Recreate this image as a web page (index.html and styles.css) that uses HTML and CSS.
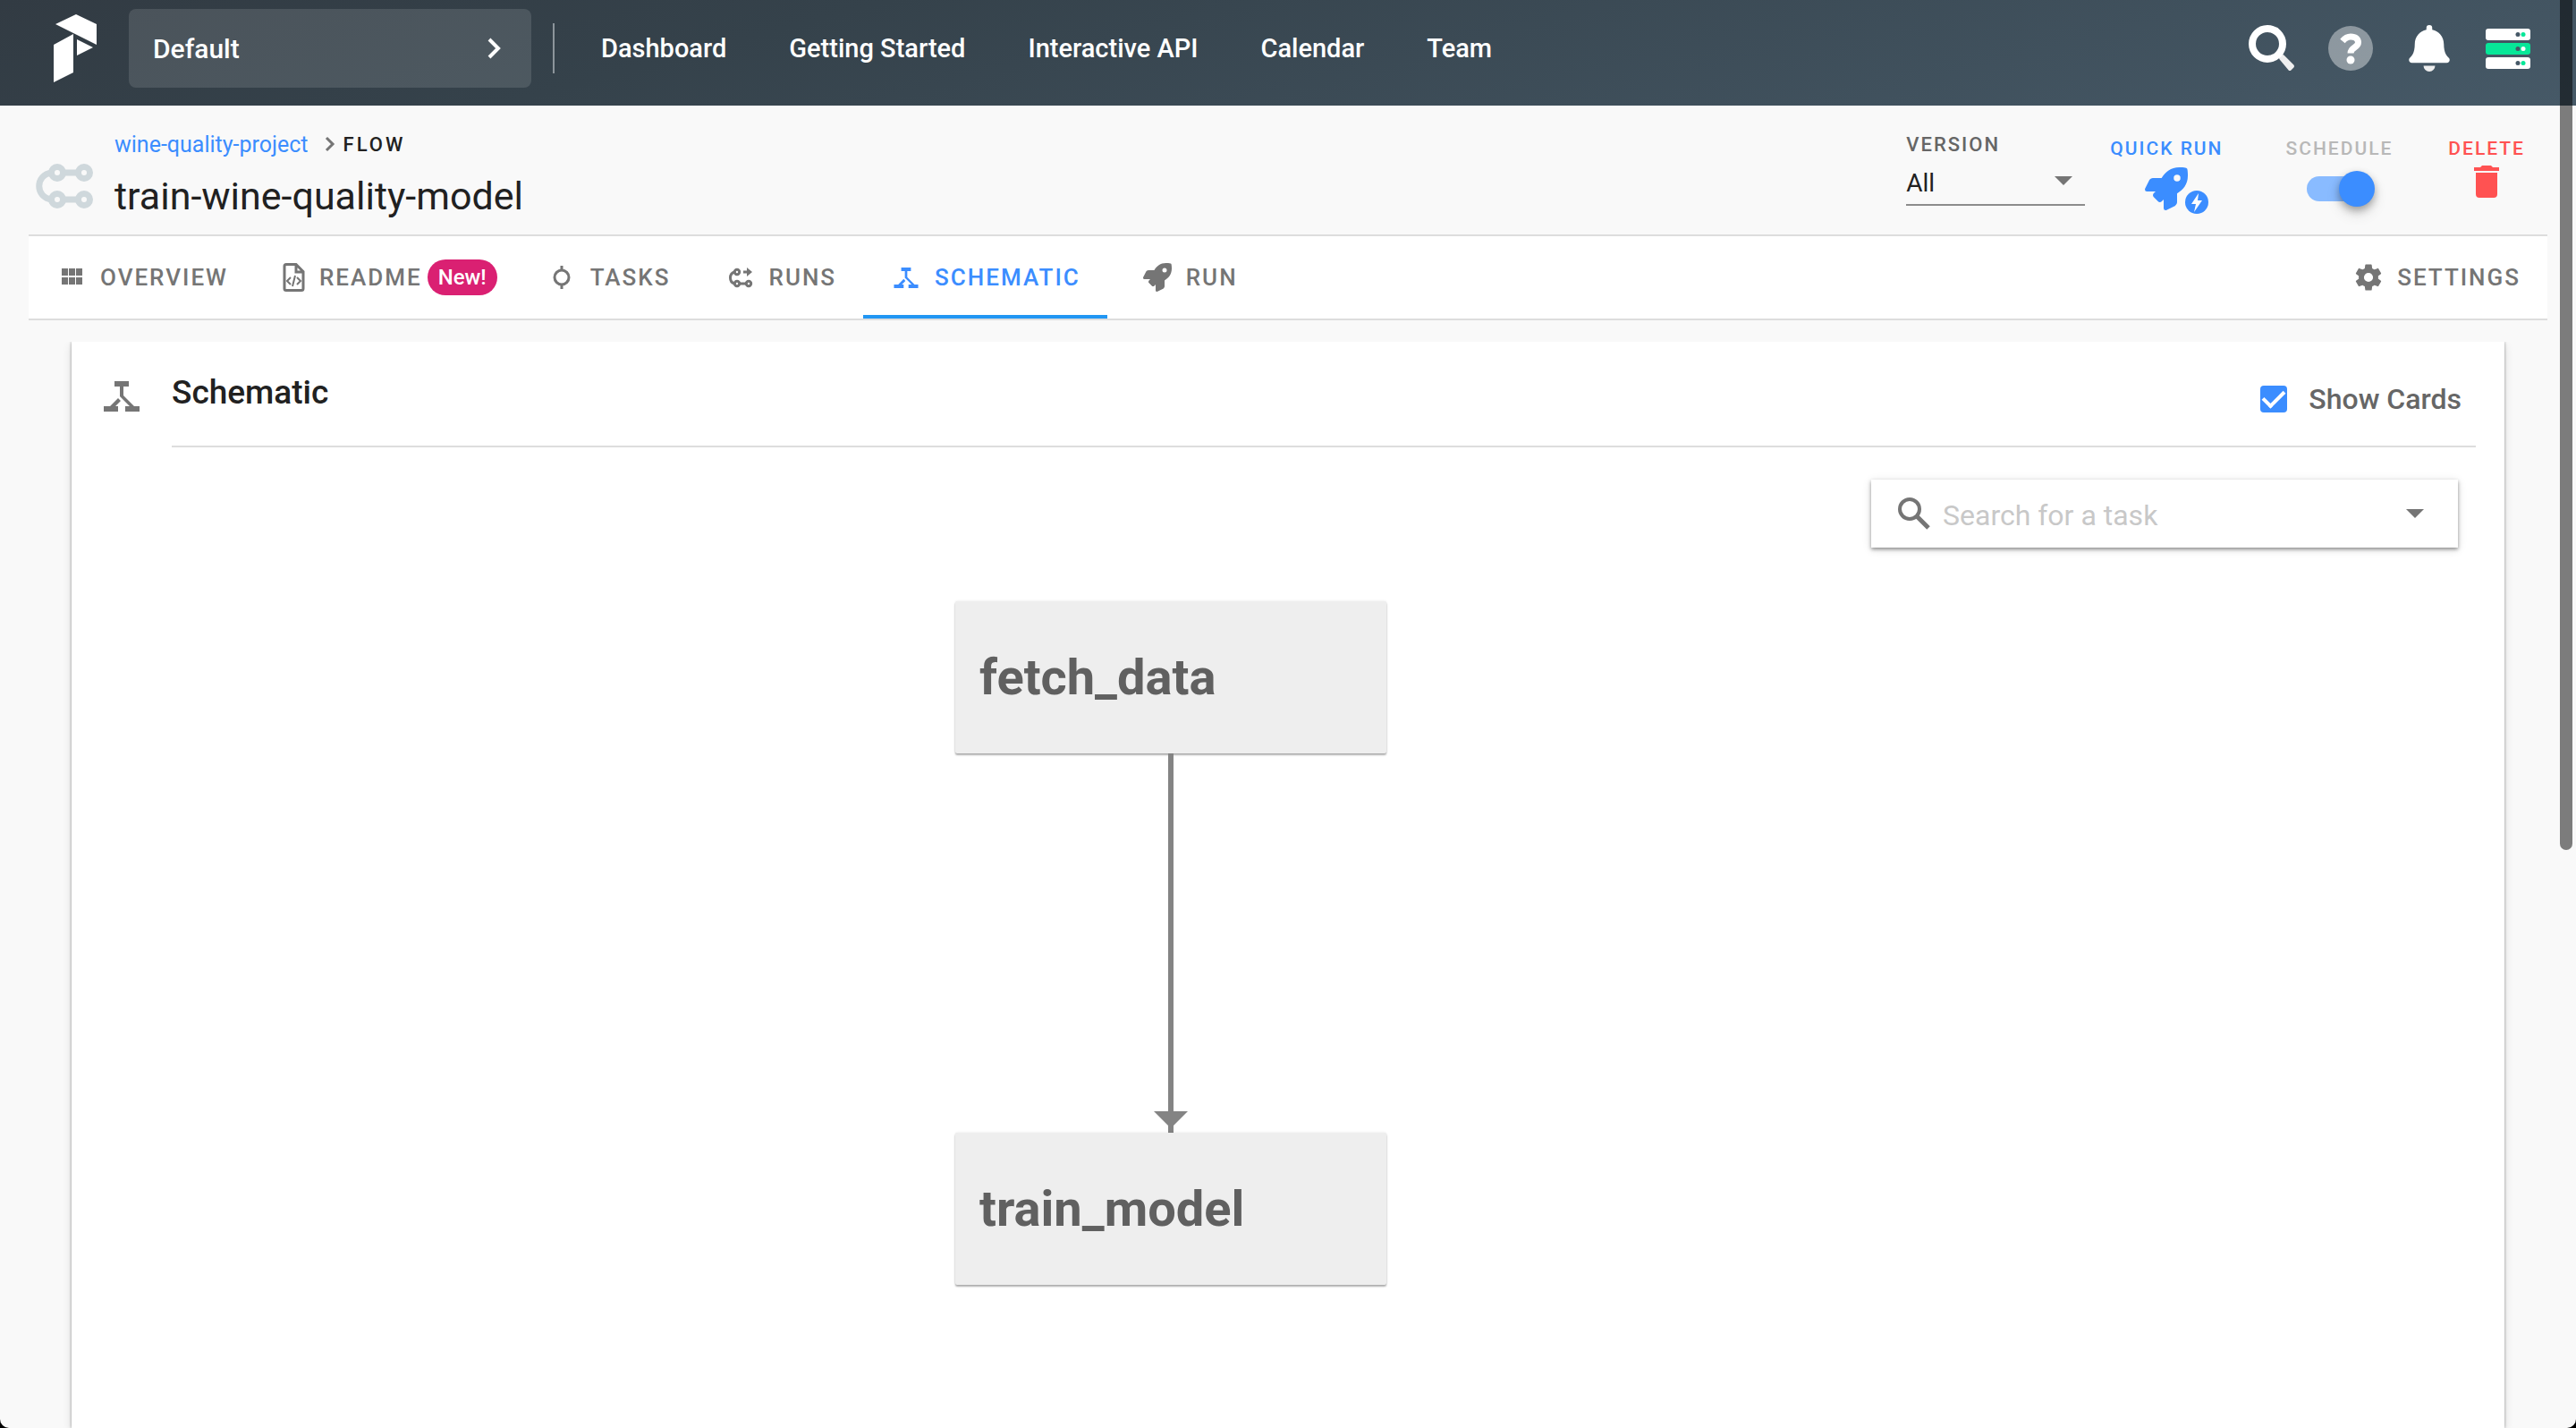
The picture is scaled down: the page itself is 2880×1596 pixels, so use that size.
FILE: index.html
```html
<!DOCTYPE html>
<html lang="en">
<head>
<meta charset="utf-8">
<title>train-wine-quality-model</title>
<link rel="stylesheet" href="styles.css">
</head>
<body>
<svg class="defs" width="0" height="0" aria-hidden="true">
  <symbol id="rocket" viewBox="0 0 512 512"><path d="M505.12 19.09c-1.19-5.53-6.66-11-12.21-12.18C460.72 0 435.51 0 410.41 0 307.18 0 245.27 55.2 199.05 128H94.84c-16.35 0-35.56 11.88-42.89 26.48L2.52 253.3A28.4 28.4 0 0 0 0 264a24 24 0 0 0 24 24h103.82l-22.48 22.47c-11.37 11.36-13 32.26 0 45.25l50.9 50.9c11.16 11.19 32.16 13.16 45.28 0L224 384.16V488a24 24 0 0 0 24 24 28.56 28.56 0 0 0 10.71-2.52l98.73-49.39c14.63-7.29 26.5-26.5 26.5-42.85V312.8C456.54 266.48 512 204.4 512 101.7c.08-25.2.08-50.4-6.88-82.61zM384 168a40 40 0 1 1 40-40 40 40 0 0 1-40 40z"/></symbol>
  <symbol id="schematic" viewBox="0 0 40 34"><path d="M12 0h16v6h-6v10l12 12h6v6H24v-6h5l-9-9L18 17V6h-6zM16 19l3 3-6 6h3v6H0v-6h7z"/></symbol>
</svg>
<div class="page">
  <header class="topbar">
    <a class="logo" href="#" aria-label="Home"><svg width="48" height="76" viewBox="0 0 48 76"><path d="M2 11 25 0l23 11v23zM0 34 22 22v43L0 76zM26 28l18 9-18 9z"/></svg></a>
    <button class="tenant" type="button">Default<svg width="16" height="24" viewBox="0 0 16 24"><path d="m3 2 10 10L3 22"/></svg></button>
    <nav class="mainnav">
      <a href="#">Dashboard</a><a href="#">Getting Started</a><a href="#">Interactive API</a><a href="#">Calendar</a><a href="#">Team</a>
    </nav>
    <div class="tools">
      <button type="button" aria-label="Search"><svg width="52" height="52" viewBox="0 0 52 52"><path d="m36 37 2-2 11 11-3 3z" fill="#eee" stroke="#eee" stroke-width="4" stroke-linejoin="round"/><circle cx="21" cy="21" r="17" fill="none" stroke="#fff" stroke-width="8"/></svg></button>
      <button type="button" aria-label="Help"><svg width="52" height="52" viewBox="0 0 52 52"><circle cx="26" cy="26" r="25" fill="#fff" fill-opacity=".4"/><path d="M17 18q4-5 9-5c6 0 8.500 3 8.500 6.500 0 6-8.500 5-8.500 12" fill="none" stroke="#fff" stroke-width="7"/><circle cx="26" cy="39" r="4.500" fill="#fff"/></svg></button>
      <button type="button" aria-label="Notifications"><svg width="52" height="52" viewBox="-32 0 512 512"><path fill="#fff" d="M439.39 362.29c-19.32-20.76-55.47-52-55.47-154.29 0-77.7-54.48-139.9-127.94-155.16V32a32 32 0 1 0-64 0v20.84C118.56 68.1 64.08 130.3 64.08 208c0 102.3-36.15 133.53-55.47 154.29A31.24 31.24 0 0 0 0 384c.11 16.4 13 32 32.1 32h383.8c19.12 0 32-15.6 32.1-32a31.23 31.23 0 0 0-8.61-21.71z"/><path fill="#eee" d="M160 448h128a64 64 0 0 1-128 0z"/></svg></button>
      <button type="button" aria-label="Agents"><svg width="52" height="52" viewBox="0 0 52 52"><rect x="1" y="4" width="50" height="13" rx="3" fill="#fff"/><rect x="1" y="20" width="50" height="13" rx="3" fill="#07e798"/><rect x="1" y="36" width="50" height="13" rx="3" fill="#fff"/><g fill="#465967"><circle cx="37" cy="10.500" r="2.500"/><circle cx="37" cy="26.500" r="2.500"/><circle cx="37" cy="42.500" r="2.500"/></g><circle cx="43" cy="10.500" r="2.500" fill="#07e798"/><circle cx="43" cy="26.500" r="2.500" fill="#fff"/><circle cx="43" cy="42.500" r="2.500" fill="#07e798"/></svg></button>
    </div>
  </header>

  <section class="flowhead">
    <svg class="flowicon" width="64" height="52" viewBox="0 0 64 52"><g fill="none" stroke="#cfd8dc" stroke-width="7"><circle cx="24" cy="11" r="6.500"/><circle cx="54" cy="11" r="6.500"/><circle cx="24" cy="41" r="6.500"/><circle cx="54" cy="41" r="6.500"/><path d="M30 11h18M30 41h18M18 11C-1 13-1 39 18 41"/></g></svg>
    <div class="names">
      <div class="crumbs"><a href="#">wine-quality-project</a><svg width="12" height="18" viewBox="0 0 12 18"><path d="m2 2 7 7-7 7"/></svg><span>FLOW</span></div>
      <h1>train-wine-quality-model</h1>
    </div>
    <div class="version">
      <label for="version">VERSION</label>
      <div class="selectwrap"><select id="version"><option>All</option></select><svg width="20" height="10" viewBox="0 0 20 10"><path d="M0 0h20L10 10z"/></svg></div>
    </div>
    <button class="action quick" type="button">QUICK RUN<span class="quickicon"><svg width="48" height="48"><use href="#rocket"/></svg><svg class="bolt" width="28" height="28" viewBox="0 0 28 28"><circle cx="14" cy="14" r="13"/><path d="m16 4-8 12h5l-2 9 9-13h-5z" fill="#fff"/></svg></span></button>
    <label class="action schedule">SCHEDULE<input type="checkbox" checked></label>
    <button class="action delete" type="button">DELETE<svg width="28" height="36" viewBox="0 0 28 36"><path d="M2 8h24v24q0 4-4 4H6q-4 0-4-4zM0 2h7l2-2h10l2 2h7v4H0z"/></svg></button>
  </section>

  <nav class="tabs">
    <a href="#"><svg width="32" height="32" viewBox="0 0 32 32"><path d="M5 6h7v8H5zm8 0h7v8h-7zm8 0h7v8h-7zM5 16h7v8H5zm8 0h7v8h-7zm8 0h7v8h-7z"/></svg>OVERVIEW</a>
    <a class="readme" href="#"><svg width="32" height="32" viewBox="0 0 32 32"><path class="line" d="M7 1.500h11l8 8v19a2 2 0 0 1-2 2H7a2 2 0 0 1-2-2v-25a2 2 0 0 1 2-2zM18 2v8h8"/><path class="thin" d="m12 16-4 4 4 4M19 16l4 4-4 4M17 14l-3 12"/></svg>README<span class="badge">New!</span></a>
    <a href="#"><svg width="32" height="32" viewBox="0 0 32 32"><path class="line" d="M16 3v5M16 24v5"/><circle class="line" cx="16" cy="16" r="8"/></svg>TASKS</a>
    <a href="#"><svg width="32" height="32" viewBox="0 0 32 32"><g class="line"><circle cx="12" cy="10" r="2.700"/><circle cx="12" cy="23" r="2.700"/><circle cx="25" cy="23" r="2.700"/><path d="M15 23h7M9 10C3 12 3 21 9 23M19 10h5"/></g><path d="m23 5 6 5-6 5z"/></svg>RUNS</a>
    <a class="active" href="#" aria-current="page"><svg width="32" height="23"><use href="#schematic"/></svg>SCHEMATIC</a>
    <a class="runtab" href="#"><svg width="48" height="32"><use href="#rocket"/></svg>RUN</a>
    <a class="settings" href="#"><svg width="32" height="32" viewBox="1 1 22 22"><path d="M12 15.500A3.500 3.500 0 0 1 8.500 12 3.500 3.500 0 0 1 12 8.500a3.500 3.500 0 0 1 3.500 3.500 3.500 3.500 0 0 1-3.500 3.500m7.430-2.530c.04-.32.07-.64.07-.97s-.03-.66-.07-1l2.110-1.630c.19-.15.24-.42.12-.64l-2-3.460c-.12-.22-.39-.31-.61-.22l-2.490 1c-.52-.39-1.060-.73-1.690-.98l-.37-2.650A.506.506 0 0 0 14 2h-4c-.25 0-.46.180-.5.420l-.37 2.650c-.63.250-1.170.59-1.690.98l-2.490-1c-.22-.09-.49 0-.61.220l-2 3.460c-.13.220-.07.490.12.640L4.570 11c-.04.340-.07.670-.07 1s.03.650.07.970l-2.110 1.660c-.19.150-.25.420-.12.640l2 3.460c.12.220.39.300.61.220l2.490-1.010c.52.400 1.060.74 1.690.99l.37 2.650c.04.240.25.420.5.420h4c.25 0 .46-.18.5-.42l.37-2.650c.63-.26 1.170-.59 1.690-.99l2.490 1.010c.22.080.49 0 .61-.22l2-3.460c.12-.22.07-.49-.12-.64z"/></svg>SETTINGS</a>
  </nav>

  <main class="card">
    <div class="cardhead">
      <svg class="cardicon" width="40" height="34"><use href="#schematic"/></svg>
      <div class="cardtitle">
        <h2>Schematic</h2>
        <label class="showcards"><input type="checkbox" checked>Show Cards</label>
      </div>
    </div>
    <label class="search">
      <svg width="36" height="36" viewBox="0 0 36 36"><circle cx="13" cy="13" r="11" fill="none" stroke="#757575" stroke-width="4"/><path d="m21 21 13 13" stroke="#757575" stroke-width="5"/></svg>
      <input type="text" placeholder="Search for a task" aria-label="Search for a task">
      <svg width="20" height="10" viewBox="0 0 20 10"><path fill="#757575" d="M0 0h20L10 10z"/></svg>
    </label>
    <div class="canvas">
      <div class="node first">fetch_data</div>
      <svg class="edge" width="38" height="424" viewBox="0 0 38 424"><path d="M16 0h6v400h16l-16 16v8h-6v-8L0 400h16z"/></svg>
      <div class="node second">train_model</div>
    </div>
  </main>
</div>
<div class="scrollthumb"></div>
</body>
</html>
```
FILE: styles.css
```css
* { box-sizing: border-box; }
html { background: #000; }
body { margin: 0; font-family: Roboto, "Liberation Sans", sans-serif; color: #212121; }
a { text-decoration: none; color: inherit; }
button { border: 0; padding: 0; background: none; font: inherit; color: inherit; cursor: pointer; }
h1, h2 { margin: 0; font-weight: 400; }
svg { display: block; flex: none; }
.defs { position: absolute; }

.page { height: 100vh; display: flex; flex-direction: column; overflow: hidden; background: #f9f9f9; border-radius: 0 0 10px 10px; }

/* top bar */
.topbar { flex: none; height: 118px; padding: 10px 50px 20px 60px; display: flex; align-items: center; color: #fff; background: linear-gradient(165deg, #323b43, #35424b 30%, #465967); font-size: 29px; font-weight: 500; }
.logo svg { fill: #fff; }
.tenant { width: 450px; height: 88px; margin-left: 36px; padding: 0 34px 0 27px; display: flex; align-items: center; justify-content: space-between; border-radius: 8px; background: rgba(255, 255, 255, .12); font-size: 30px; }
.tenant svg { fill: none; stroke: #fff; stroke-width: 4; }
.mainnav { height: 56px; margin-left: 24px; padding-left: 52px; display: flex; align-items: center; gap: 70px; border-left: 2px solid #8c959b; }
.tools { margin-left: auto; display: flex; gap: 36px; }

/* flow heading */
.flowhead { flex: none; height: 144px; padding: 26px 57px 0 40px; display: flex; align-items: flex-start; }
.flowicon { margin-top: 38px; }
.names { margin-left: 24px; flex: 1; }
.crumbs { height: 34px; display: flex; align-items: center; font-size: 25px; }
.crumbs a { color: #3b8dff; }
.crumbs svg { margin: 0 9px 0 18px; fill: none; stroke: #757575; stroke-width: 3; }
.crumbs span { font-size: 22px; font-weight: 500; letter-spacing: 3px; }
h1 { font-size: 43px; line-height: 48px; margin-top: 17px; }
.version { width: 200px; margin-right: 28px; }
.version label { display: block; font-size: 22px; line-height: 36px; font-weight: 500; letter-spacing: 2px; color: #666; }
.selectwrap { height: 50px; display: flex; align-items: center; border-bottom: 2px solid #8c8c8c; }
.selectwrap select { flex: 1; border: 0; padding: 0; appearance: none; background: none; font: inherit; font-size: 28px; color: #212121; }
.selectwrap svg { margin: 0 14px 4px 0; fill: #757575; }
.action { display: flex; flex-direction: column; align-items: center; font-size: 21px; line-height: 26px; font-weight: 500; letter-spacing: 2px; margin-top: 9px; }
.quick { color: #3b8dff; fill: #3b8dff; }
.quickicon { position: relative; margin: 8px 0 0; }
.bolt { position: absolute; left: 44px; top: 25px; }
.schedule { margin-left: 70px; color: #b8b8b8; }
.schedule input { appearance: none; position: relative; width: 72px; height: 28px; margin: 18px 0 0; border-radius: 14px; background: #89bbff; }
.schedule input::after { content: ""; position: absolute; right: -4px; top: -6px; width: 40px; height: 40px; border-radius: 50%; background: #3b8dff; box-shadow: 0 4px 8px rgba(0, 0, 0, .3), 0 8px 16px rgba(0, 0, 0, .12); }
.delete { margin-left: 62px; color: #ff5252; fill: #ff5252; gap: 6px; }

/* tabs */
.tabs { flex: none; height: 96px; margin: 0 32px; padding: 0; display: flex; align-items: stretch; background: #fff; border: solid #ddd; border-width: 2px 0; font-size: 26px; font-weight: 500; letter-spacing: 2px; color: #757575; fill: #757575; }
.tabs a { display: flex; align-items: center; gap: 16px; padding: 0 30px 0 32px; border-bottom: 4px solid transparent; border-top: 4px solid transparent; }
.tabs .active { color: #3b8dff; fill: #3b8dff; border-bottom-color: #2196f3; }
.tabs .readme { gap: 12px; padding: 0 24px 0 28px; }
.tabs .runtab { gap: 8px; }
.tabs .settings { margin-left: auto; }
.line { fill: none; stroke: #757575; stroke-width: 3; }
.thin { fill: none; stroke: #757575; stroke-width: 2; }
.badge { height: 40px; margin-left: -6px; padding: 0 12px; border-radius: 20px; background: #da2072; color: #fff; font-size: 24px; line-height: 40px; letter-spacing: 0; }

/* schematic card */
.card { flex: 1; position: relative; margin: 24px 80px 0; padding: 36px 32px 0 36px; background: #fff; box-shadow: 0 0 3px rgba(0, 0, 0, .4), 0 4px 10px rgba(0, 0, 0, .12); clip-path: inset(0 -20px); }
.cardhead { display: flex; gap: 36px; }
.cardicon { margin-top: 8px; fill: #757575; }
.cardtitle { flex: 1; height: 82px; display: flex; justify-content: space-between; border-bottom: 2px solid #ddd; }
h2 { font-size: 37px; line-height: 42px; font-weight: 500; }
.showcards { height: 56px; display: flex; align-items: center; gap: 24px; margin-right: 16px; font-size: 32px; font-weight: 500; color: #666; }
.showcards input { appearance: none; width: 30px; height: 30px; margin: 0; border-radius: 4px; background: #3b8dff; display: grid; place-items: center; }
.showcards input::after { content: ""; width: 20px; height: 10px; border: solid #fff; border-width: 0 0 4px 4px; transform: rotate(-45deg) translate(2px, -2px); }
.search { width: 656px; height: 76px; margin: 36px 20px 0 auto; padding: 0 38px 0 30px; display: flex; align-items: center; box-shadow: 0 2px 4px rgba(0, 0, 0, .4), 0 2px 10px rgba(0, 0, 0, .12); }
.search input { flex: 1; min-width: 0; margin: 0 14px; padding: 3px 0 0; border: 0; outline: 0; background: none; font: inherit; font-size: 32px; }
.search input::placeholder { color: #c8c8c8; opacity: 1; }

/* diagram */
.canvas { position: absolute; inset: 290px 0 0 0; }
.node { position: absolute; left: 988px; width: 482px; height: 170px; padding-left: 27px; border-radius: 2px; background: #eee; box-shadow: 0 2px 2px rgba(0, 0, 0, .3), 0 0 3px rgba(0, 0, 0, .1); font-size: 56px; line-height: 170px; font-weight: 700; color: #606060; }
.first { top: 0; }
.second { top: 594px; }
.edge { position: absolute; left: 1210px; top: 170px; fill: #848484; }

.scrollthumb { position: fixed; top: -8px; right: 4px; width: 14px; height: 958px; border-radius: 7px; background: rgba(0, 0, 0, .5); }
```
